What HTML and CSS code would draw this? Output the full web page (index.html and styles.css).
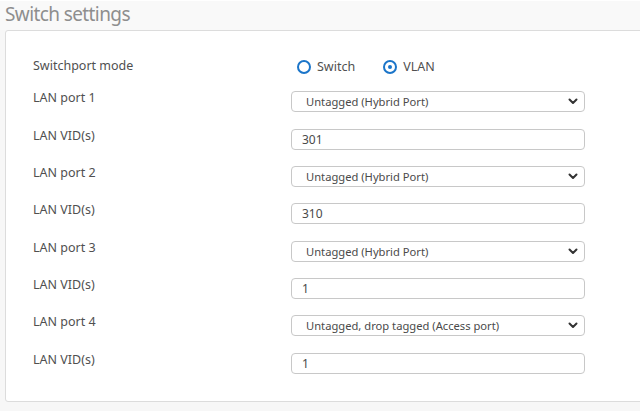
FILE: index.html
```html
<!DOCTYPE html>
<html>
<head>
<meta charset="utf-8">
<link rel="stylesheet" href="styles.css">
</head>
<body>
<div class="page">
  <div class="header"><h1 class="title">Switch settings</h1></div>
  <div class="panel">
    <div class="form">
      <div class="label">Switchport mode</div>
      <div class="radios">
        <span class="radio"><span class="circle"></span>Switch</span>
        <span class="radio"><span class="circle on"></span>VLAN</span>
      </div>

      <div class="label">LAN port 1</div>
      <div class="select"><span>Untagged (Hybrid Port)</span><svg class="chev" width="10" height="7" viewBox="0 0 10 7"><path d="M1.5 1.5 L5 5 L8.5 1.5" fill="none" stroke="#333" stroke-width="2" stroke-linecap="round" stroke-linejoin="round"/></svg></div>
      <div class="label">LAN VID(s)</div>
      <div class="input">301</div>

      <div class="label">LAN port 2</div>
      <div class="select"><span>Untagged (Hybrid Port)</span><svg class="chev" width="10" height="7" viewBox="0 0 10 7"><path d="M1.5 1.5 L5 5 L8.5 1.5" fill="none" stroke="#333" stroke-width="2" stroke-linecap="round" stroke-linejoin="round"/></svg></div>
      <div class="label">LAN VID(s)</div>
      <div class="input">310</div>

      <div class="label">LAN port 3</div>
      <div class="select"><span>Untagged (Hybrid Port)</span><svg class="chev" width="10" height="7" viewBox="0 0 10 7"><path d="M1.5 1.5 L5 5 L8.5 1.5" fill="none" stroke="#333" stroke-width="2" stroke-linecap="round" stroke-linejoin="round"/></svg></div>
      <div class="label">LAN VID(s)</div>
      <div class="input">1</div>

      <div class="label">LAN port 4</div>
      <div class="select"><span>Untagged, drop tagged (Access port)</span><svg class="chev" width="10" height="7" viewBox="0 0 10 7"><path d="M1.5 1.5 L5 5 L8.5 1.5" fill="none" stroke="#333" stroke-width="2" stroke-linecap="round" stroke-linejoin="round"/></svg></div>
      <div class="label">LAN VID(s)</div>
      <div class="input">1</div>
    </div>
  </div>
</div>
</body>
</html>
```

FILE: styles.css
```css
html, body {
  margin: 0;
  padding: 0;
  background: #f7f7f7;
  overflow: hidden;
}
body {
  font-family: "Noto Sans", "Liberation Sans", sans-serif;
  color: #4a4a4a;
}
.page {
  width: 640px;
  height: 411px;
  overflow: hidden;
}
.header {
  height: 30px;
  border-top: 1px solid #ffffff;
  background: #f9f9f9;
  box-sizing: border-box;
  padding-left: 5px;
}
.title {
  margin: 0;
  font-weight: normal;
  font-size: 19px;
  letter-spacing: -0.6px;
  line-height: 26px;
  color: #8e8e8e;
}
.panel {
  margin-left: 5px;
  width: 680px;
  box-sizing: border-box;
  background: #fff;
  border: 1px solid #dcdcdc;
  border-radius: 3px;
  padding: 28px 0 27px 27px;
}
.form {
  display: grid;
  grid-template-columns: 258px 294px;
  row-gap: 16.33px;
  align-items: start;
}
.label {
  font-size: 12.5px;
  line-height: 14px;
  color: #505050;
}
.radios {
  display: flex;
  gap: 22px;
  height: 15px;
  margin-bottom: 1px;
  font-size: 12.5px;
  line-height: 15px;
  color: #505050;
}
.radio {
  display: flex;
  align-items: center;
  gap: 6px;
}
.circle {
  display: inline-block;
  width: 14px;
  height: 14px;
  box-sizing: border-box;
  border: 2px solid #1b75c9;
  border-radius: 50%;
  position: relative;
  margin-left: 6px;
}
.circle.on::after {
  content: "";
  position: absolute;
  left: 3px;
  top: 3px;
  width: 4px;
  height: 4px;
  border-radius: 50%;
  background: #1b75c9;
}
.select, .input {
  height: 21px;
  box-sizing: border-box;
  border: 1px solid #c8c8c8;
  border-radius: 4px;
  background: #fff;
  line-height: 19px;
  color: #4a4a4a;
  display: flex;
  align-items: center;
}
.select {
  font-size: 11.2px;
  padding: 0 6px 0 14px;
  justify-content: space-between;
}
.input {
  font-size: 12px;
  padding-left: 10px;
}
.chev {
  display: block;
}
```
